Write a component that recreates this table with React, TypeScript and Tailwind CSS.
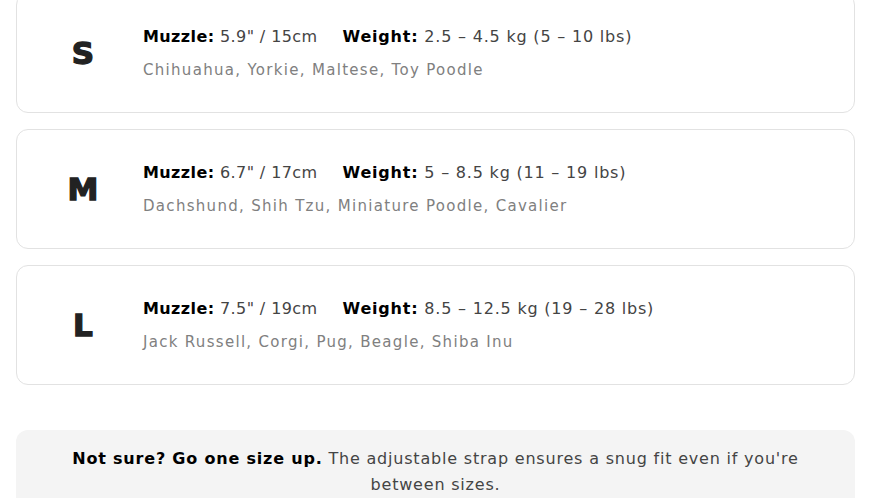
const sizes = [
  {
    size: 'S',
    muzzle: '5.9" / 15cm',
    weight: '2.5 – 4.5 kg (5 – 10 lbs)',
    breeds: 'Chihuahua, Yorkie, Maltese, Toy Poodle',
  },
  {
    size: 'M',
    muzzle: '6.7" / 17cm',
    weight: '5 – 8.5 kg (11 – 19 lbs)',
    breeds: 'Dachshund, Shih Tzu, Miniature Poodle, Cavalier',
  },
  {
    size: 'L',
    muzzle: '7.5" / 19cm',
    weight: '8.5 – 12.5 kg (19 – 28 lbs)',
    breeds: 'Jack Russell, Corgi, Pug, Beagle, Shiba Inu',
  },
];

function SizeCard({ size, muzzle, weight, breeds }: (typeof sizes)[number]) {
  return (
    <div className="flex h-[120px] items-center rounded-xl border border-[#e2e2e2] bg-white">
      <div className="flex w-[126px] shrink-0 justify-center pl-[6px] text-[31px] font-bold text-[#222] [-webkit-text-stroke:1.4px_#222]">
        {size}
      </div>
      <div className="flex flex-col gap-[10px]">
        <div className="flex gap-[25px] text-[16px] tracking-[0.4px] text-[#444]">
          <span>
            <b className="font-bold text-black">Muzzle:</b> {muzzle}
          </span>
          <span className="tracking-[0.8px]">
            <b className="font-bold text-black">Weight:</b> {weight}
          </span>
        </div>
        <div className="text-[15px] tracking-[1.3px] text-[#808080]">{breeds}</div>
      </div>
    </div>
  );
}

export default function App() {
  return (
    <div
      className="h-[498px] overflow-hidden bg-white pl-4 pr-5"
      style={{ fontFamily: '"DejaVu Sans", "Liberation Sans", sans-serif' }}
    >
      <div className="-mt-[7px] flex flex-col gap-4">
        {sizes.map((s) => (
          <SizeCard key={s.size} {...s} />
        ))}
      </div>
      <div className="mt-[45px] rounded-xl bg-[#f4f4f4] px-[48px] pt-[16px] pb-6 text-center text-[16px] leading-[26px] tracking-[0.8px] text-[#444]">
        <b className="font-bold text-black">Not sure? Go one size up.</b> The adjustable strap ensures a snug fit even if you're
        between sizes.
      </div>
    </div>
  );
}
